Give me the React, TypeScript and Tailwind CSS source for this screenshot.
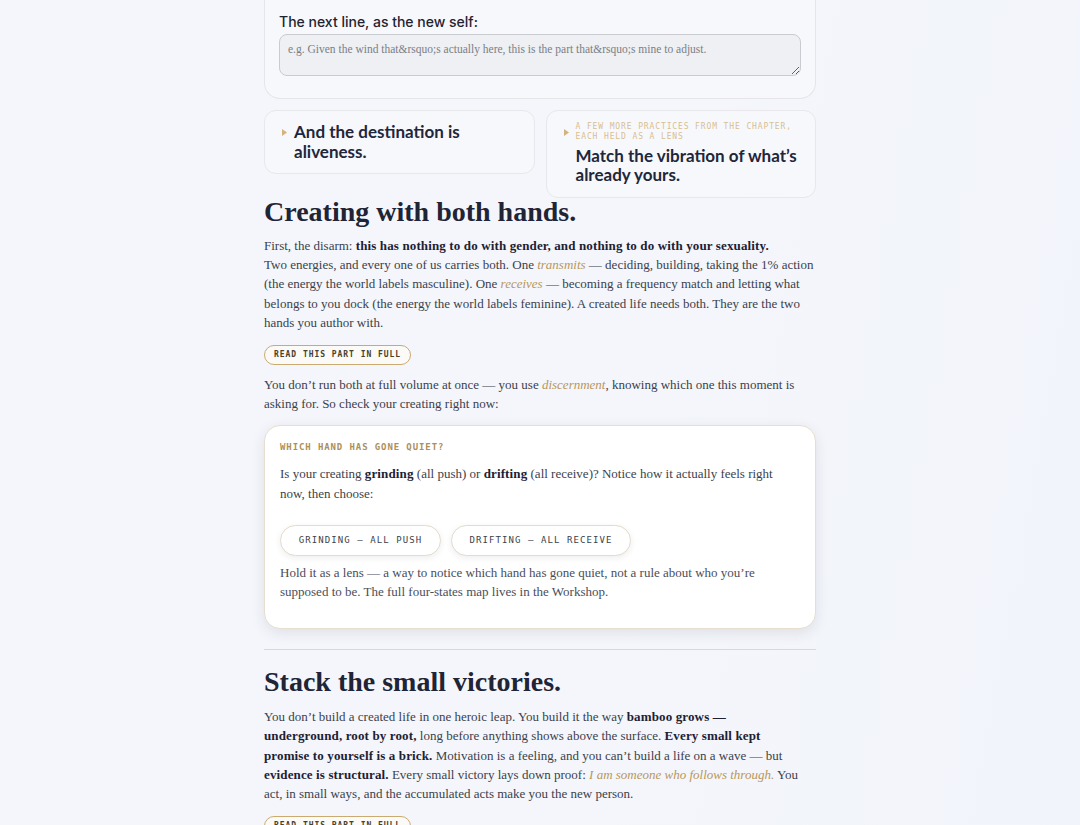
import React from "react";

function Caret() {
  return (
    <svg width="5" height="7" viewBox="0 0 5 7" className="shrink-0 mt-[7px]">
      <path d="M0 0 L5 3.5 L0 7 Z" fill="#d4b47c" />
    </svg>
  );
}

function ReadButton() {
  return (
    <button className="rounded-full border border-[#c9ab72] bg-[#fbfaf6] px-[9px] h-[20px] font-['DejaVu_Sans_Mono','Liberation_Mono',monospace] text-[8px] font-bold tracking-[0.12em] text-[#4a3f2a]">
      READ THIS PART IN FULL
    </button>
  );
}

function Gold({ children }: { children: React.ReactNode }) {
  return <em className="text-[#b8975c]">{children}</em>;
}

function B({ children }: { children: React.ReactNode }) {
  return <strong className="font-bold text-[#1d2133] tracking-[0.01em]">{children}</strong>;
}

export default function App() {
  return (
    <div className="min-h-screen w-full bg-[linear-gradient(100deg,#f5f6fb_0%,#f4f6fb_60%,#f1f4fa_100%)] overflow-hidden font-['Liberation_Serif','DejaVu_Serif',serif]">
      <div className="w-[552px] mx-auto">
        {/* top card */}
        <div className="rounded-b-2xl border border-t-0 border-[#e5e5ea] bg-[#f7f8fc] px-[14px] pt-[14px] pb-[22px]">
          <label className="block font-['Inter','Liberation_Sans',sans-serif] text-[14px] font-medium text-[#1f2330] leading-[16px] mb-[4px]">
            The next line, as the new self:
          </label>
          <textarea
            rows={2}
            placeholder={"e.g. Given the wind that&rsquo;s actually here, this is the part that&rsquo;s mine to adjust."}
            className="block w-full h-[42px] rounded-lg border border-[#c9cbd0] bg-[#eef0f3] px-[8px] py-[6px] font-['Liberation_Serif',serif] text-[11.5px] text-[#555] placeholder:text-[#7b7e86] outline-none"
          />
        </div>

        {/* two cards */}
        <div className="mt-[11px] flex items-start gap-[11px] font-['Lato','Noto_Sans',sans-serif]">
          <div className="flex-1 rounded-xl border border-[#e7e7ec] bg-[#f7f8fc] pl-[17px] pr-[14px] pt-[11px] pb-[11px] flex gap-[7px]">
            <Caret />
            <div className="text-[17px] font-bold leading-[20px] text-[#22263a]">
              And the destination is
              <br />
              aliveness.
            </div>
          </div>
          <div className="flex-1 rounded-xl border border-[#e7e7ec] bg-[#f7f8fc] pl-[17px] pr-[14px] pt-[11px] pb-[13px] flex gap-[7px]">
            <Caret />
            <div>
              <div className="font-['DejaVu_Sans_Mono','Liberation_Mono',monospace] text-[8px] leading-[10px] tracking-[0.11em] text-[#d8bf92] uppercase">
                A few more practices from the chapter,
                <br />
                each held as a lens
              </div>
              <div className="mt-[4px] text-[17px] font-bold leading-[19px] text-[#22263a]">
                Match the vibration of what’s
                <br />
                already yours.
              </div>
            </div>
          </div>
        </div>

        {/* section 1 */}
        <h2 className="text-[28px] font-bold leading-[28px] text-[#1f2436]">Creating with both hands.</h2>
        <p className="mt-[10px] text-[13px] leading-[19.2px] text-[#3b3f4c]">
          First, the disarm: <B>this has nothing to do with gender, and nothing to do with your sexuality.</B>
          <br />
          Two energies, and every one of us carries both. One <Gold>transmits</Gold> — deciding, building, taking the
          1% action
          <br />
          (the energy the world labels masculine). One <Gold>receives</Gold> — becoming a frequency match and letting
          what
          <br />
          belongs to you dock (the energy the world labels feminine). A created life needs both. They are the two
          <br />
          hands you author with.
        </p>
        <div className="mt-[13px] flex">
          <ReadButton />
        </div>
        <p className="mt-[10px] text-[13px] leading-[19.2px] text-[#3b3f4c]">
          You don’t run both at full volume at once — you use <Gold>discernment</Gold>, knowing which one this moment
          is
          <br />
          asking for. So check your creating right now:
        </p>

        {/* interactive card */}
        <div className="mt-[12px] rounded-2xl border border-[#e6dfcf] bg-white px-[15px] pt-[15px] pb-[27px] shadow-[0_4px_14px_rgba(40,40,70,0.10)]">
          <div className="font-['DejaVu_Sans_Mono','Liberation_Mono',monospace] text-[9px] font-bold leading-[12px] tracking-[0.1em] text-[#ad8f58]">
            WHICH HAND HAS GONE QUIET?
          </div>
          <p className="mt-[11px] text-[13px] leading-[19.2px] text-[#3b3f4c]">
            Is your creating <B>grinding</B> (all push) or <B>drifting</B> (all receive)? Notice how it actually feels
            right
            <br />
            now, then choose:
          </p>
          <div className="mt-[22px] flex gap-[10px] font-['DejaVu_Sans_Mono','Liberation_Mono',monospace]">
            <button className="h-[31px] w-[161px] rounded-full border border-[#e3dccd] bg-white text-[9px] tracking-[0.12em] text-[#3b3f4c] shadow-[0_2px_6px_rgba(40,40,70,0.08)]">
              GRINDING — ALL PUSH
            </button>
            <button className="h-[31px] w-[180px] rounded-full border border-[#e3dccd] bg-white text-[9px] tracking-[0.12em] text-[#3b3f4c] shadow-[0_2px_6px_rgba(40,40,70,0.08)]">
              DRIFTING — ALL RECEIVE
            </button>
          </div>
          <p className="mt-[7px] text-[13px] leading-[19.2px] text-[#4a4e5a]">
            Hold it as a lens — a way to notice which hand has gone quiet, not a rule about who you’re
            <br />
            supposed to be. The full four-states map lives in the Workshop.
          </p>
        </div>

        <hr className="mt-[20px] border-0 border-t border-[#d6d9e0]" />

        {/* section 2 */}
        <h2 className="mt-[18px] text-[28px] font-bold leading-[28px] text-[#1f2436]">Stack the small victories.</h2>
        <p className="mt-[11px] text-[13px] leading-[19.2px] text-[#3b3f4c]">
          You don’t build a created life in one heroic leap. You build it the way <B>bamboo grows —</B>
          <br />
          <B>underground, root by root,</B> long before anything shows above the surface. <B>Every small kept</B>
          <br />
          <B>promise to yourself is a brick.</B> Motivation is a feeling, and you can’t build a life on a wave — but
          <br />
          <B>evidence is structural.</B> Every small victory lays down proof:{" "}
          <Gold>I am someone who follows through.</Gold> You
          <br />
          act, in small ways, and the accumulated acts make you the new person.
        </p>
        <div className="mt-[13px] flex">
          <ReadButton />
        </div>
      </div>
    </div>
  );
}
